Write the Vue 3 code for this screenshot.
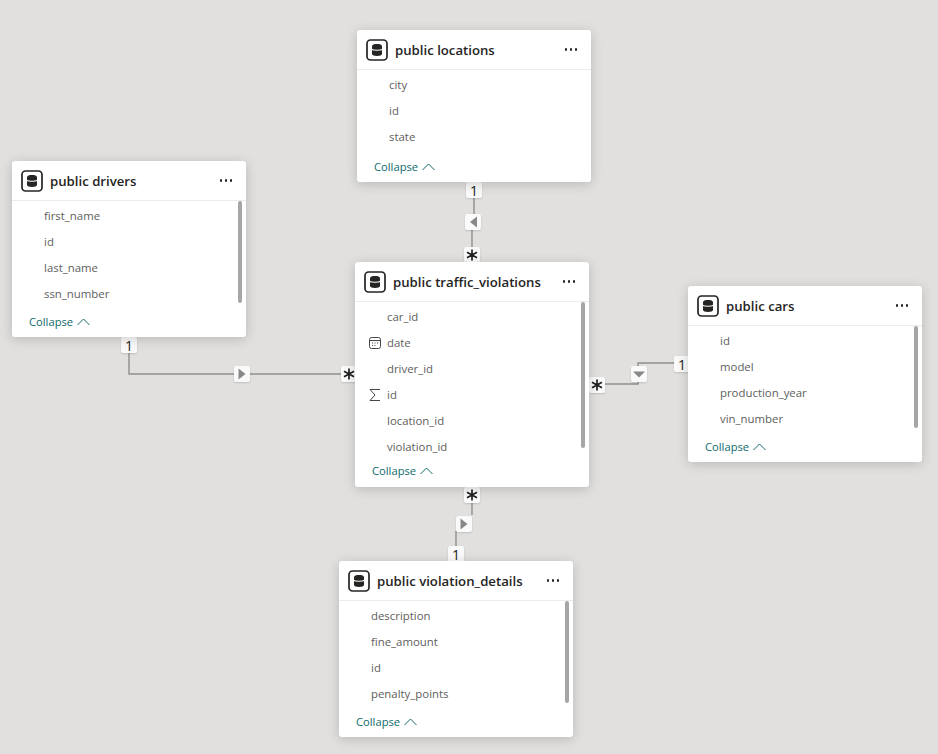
<script setup>
const tables = [
  { name: "public locations", x: 357, y: 30, h: 152, gap: 9, scroll: 0, fields: [{ n: "city" }, { n: "id" }, { n: "state" }] },
  { name: "public drivers", x: 12, y: 161, h: 176, gap: 7, scroll: 102, fields: [{ n: "first_name" }, { n: "id" }, { n: "last_name" }, { n: "ssn_number" }] },
  {
    name: "public traffic_violations", x: 355, y: 262, h: 225, gap: 3, scroll: 146,
    fields: [{ n: "car_id" }, { n: "date", icon: "cal" }, { n: "driver_id" }, { n: "id", icon: "sum" }, { n: "location_id" }, { n: "violation_id" }],
  },
  { name: "public cars", x: 688, y: 286, h: 176, gap: 7, scroll: 102, fields: [{ n: "id" }, { n: "model" }, { n: "production_year" }, { n: "vin_number" }] },
  { name: "public violation_details", x: 339, y: 561, h: 176, gap: 7, scroll: 102, fields: [{ n: "description" }, { n: "fine_amount" }, { n: "id" }, { n: "penalty_points" }] },
];

const lines = [
  "M474 197V214", "M472 230V247",
  "M129 352V374H341",
  "M604 384H638V363H674",
  "M472 502V515", "M456 531V546",
];

const badges = [
  { x: 466, y: 182, t: "1" },
  { x: 465, y: 214, arrow: "left" },
  { x: 464, y: 247, t: "*" },
  { x: 121, y: 337, t: "1" },
  { x: 234, y: 366, arrow: "right" },
  { x: 341, y: 366, t: "*" },
  { x: 589, y: 377, t: "*" },
  { x: 631, y: 366, arrow: "down" },
  { x: 674, y: 356, t: "1" },
  { x: 464, y: 487, t: "*" },
  { x: 456, y: 516, arrow: "right" },
  { x: 448, y: 546, t: "1" },
];

const arrows = { left: "M12 2.5V13.5L5 8Z", right: "M4.5 2.5V13.5L11.5 8Z", down: "M2 5.5H14L8 11.5Z" };
</script>

<template>
  <div class="canvas">
    <svg class="wires" width="938" height="754">
      <path v-for="d in lines" :key="d" :d="d" />
    </svg>

    <div v-for="b in badges" :key="b.x + '-' + b.y" class="badge" :style="{ left: b.x + 'px', top: b.y + 'px' }">
      <svg v-if="b.arrow" width="16" height="16" viewBox="0 0 16 16"><path :d="arrows[b.arrow]" fill="#8a8886" /></svg>
      <svg v-else-if="b.t === '*'" width="16" height="16" viewBox="0 0 16 16">
        <path d="M8 2.5V13.5M3 5.2L13 10.8M13 5.2L3 10.8" stroke="#201f1e" stroke-width="1.7" fill="none" />
      </svg>
      <span v-else>{{ b.t }}</span>
    </div>

    <div
      v-for="t in tables"
      :key="t.name"
      class="card"
      :style="{ left: t.x + 'px', top: t.y + 'px', height: t.h + 'px' }"
    >
      <div class="head">
        <svg class="db" width="22" height="22" viewBox="0 0 22 22">
          <rect x="1" y="1" width="20" height="20" rx="3.5" fill="none" stroke="#252423" stroke-width="1.7" />
          <path d="M6 7.2C6 5.6 8.2 5 11 5S16 5.6 16 7.2V14.8C16 16.4 13.8 17 11 17S6 16.4 6 14.8Z" fill="#252423" />
          <path d="M5.5 10.2C7 11.6 15 11.6 16.5 10.2" fill="none" stroke="#fff" stroke-width="1.1" />
        </svg>
        <span class="title">{{ t.name }}</span>
        <span class="dots"><i></i><i></i><i></i></span>
      </div>

      <div class="rows">
        <div v-for="f in t.fields" :key="f.n" class="row">
          <svg v-if="f.icon === 'cal'" class="ficon" width="14" height="14" viewBox="0 0 14 14">
            <rect x="1.5" y="1.5" width="11" height="11" rx="2" fill="none" stroke="#484644" />
            <path d="M1.5 4.5H12.5" stroke="#484644" />
            <path d="M4 7H5M6.5 7H7.5M9 7H10M4 9.5H5M6.5 9.5H7.5" stroke="#484644" />
          </svg>
          <svg v-if="f.icon === 'sum'" class="ficon" width="14" height="14" viewBox="0 0 14 14">
            <path d="M12 1.5H2L7 7L2 12.5H12" fill="none" stroke="#484644" />
          </svg>
          <span>{{ f.n }}</span>
        </div>
      </div>

      <div class="collapse" :style="{ marginTop: t.gap + 'px' }">
        Collapse
        <svg width="13" height="8" viewBox="0 0 13 8"><path d="M0.5 7L6.5 1L12.5 7" fill="none" stroke="#0e6b6b" /></svg>
      </div>

      <div v-if="t.scroll" class="thumb" :style="{ height: t.scroll + 'px' }"></div>
    </div>
  </div>
</template>

<style scoped>
.canvas {
  position: relative;
  width: 938px;
  height: 754px;
  background: #e1e0df;
  overflow: hidden;
  font-family: "Open Sans", "Noto Sans", sans-serif;
}

.wires {
  position: absolute;
  left: 0;
  top: 0;
}

.wires path {
  fill: none;
  stroke: #8f8e8c;
  stroke-width: 1.4;
}

.badge {
  position: absolute;
  width: 16px;
  height: 16px;
  display: flex;
  align-items: center;
  justify-content: center;
  background: #fafafa;
  border-radius: 2px;
  box-shadow: 0 1px 2px rgba(0, 0, 0, 0.15);
  font-size: 14px;
  color: #201f1e;
}

.card {
  position: absolute;
  width: 234px;
  background: #fff;
  border-radius: 3px;
  box-shadow: 0 2px 12px rgba(0, 0, 0, 0.18);
}

.head {
  display: flex;
  align-items: center;
  height: 39px;
  padding: 0 9px;
  border-bottom: 1px solid #edebe9;
}

.title {
  margin-left: 7px;
  flex: 1;
  font-size: 13.2px;
  font-weight: 600;
  color: #252423;
  white-space: nowrap;
}

.dots {
  display: flex;
  gap: 2.5px;
  margin-right: 5px;
}

.dots i {
  width: 2.5px;
  height: 2.5px;
  border-radius: 50%;
  background: #252423;
}

.rows {
  padding-top: 2px;
}

.row {
  position: relative;
  height: 26px;
  line-height: 25px;
  padding-left: 32px;
  font-size: 11.4px;
  color: #605e5c;
}

.ficon {
  position: absolute;
  left: 13px;
  top: 6px;
}

.collapse {
  display: flex;
  align-items: center;
  gap: 4px;
  padding-left: 17px;
  font-size: 11.2px;
  line-height: 16px;
  color: #0e6b6b;
}

.thumb {
  position: absolute;
  right: 4px;
  top: 40px;
  width: 4px;
  background: #a8a6a4;
  border-radius: 2px;
}
</style>
